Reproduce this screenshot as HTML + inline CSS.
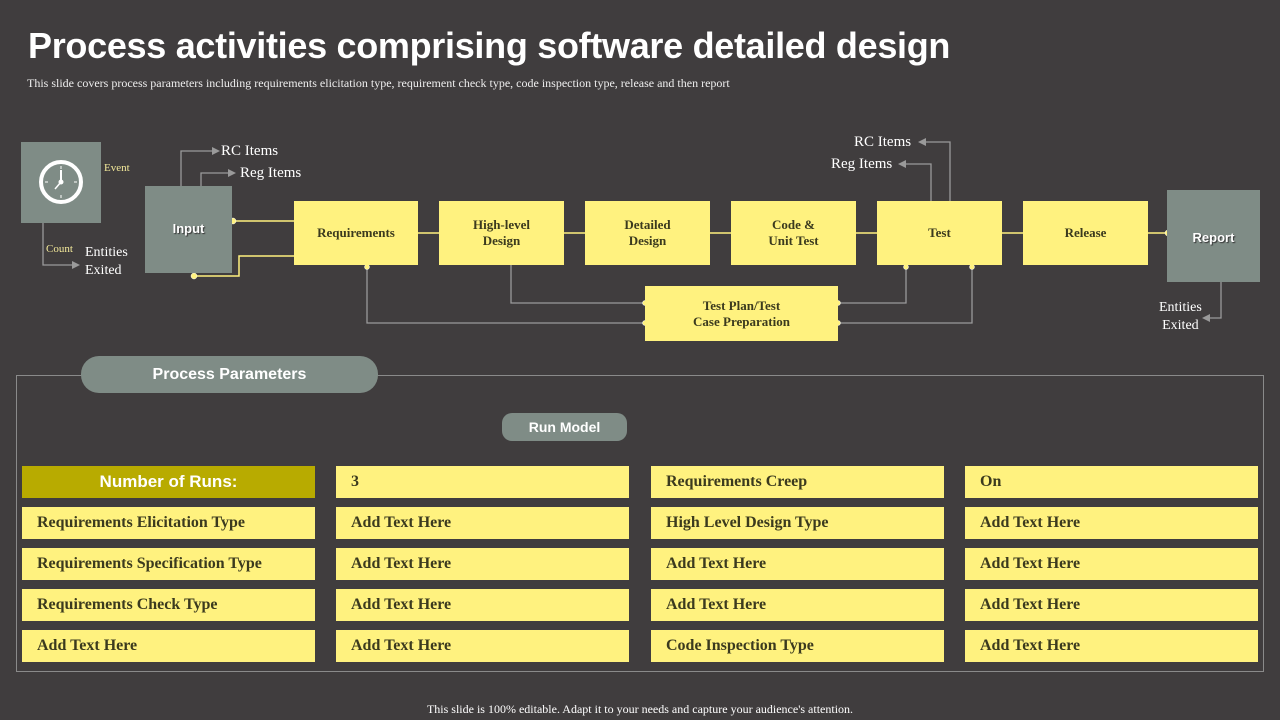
<!DOCTYPE html>
<html><head><meta charset="utf-8"><style>
*{margin:0;padding:0;box-sizing:border-box}
body{width:1280px;height:720px;background:#403d3e;position:relative;overflow:hidden;font-family:"Liberation Serif",serif}
.a{position:absolute}
h1{position:absolute;left:28px;top:25px;font:bold 36px "Liberation Sans",sans-serif;color:#fff;letter-spacing:-0.3px;white-space:nowrap}
.sub{left:27px;top:76px;font-size:12px;color:#eee;white-space:nowrap}
.y{background:#fff27f;color:#3b3a1e;font-weight:bold;font-size:13px;display:flex;align-items:center;justify-content:center;text-align:center;line-height:16px}
.g{background:#7f8c86;color:#fff;font:bold 13px "Liberation Sans",sans-serif;display:flex;align-items:center;justify-content:center;text-shadow:1px 1px 1px #333}
.w{color:#fff;font-size:15px;white-space:nowrap}
.c{background:#fff27f;color:#3b3a1e;font-weight:bold;font-size:16px;display:flex;align-items:center;padding-left:15px;height:32px;width:293px}
.pill{background:#7f8c86;color:#fff;font:bold 16px "Liberation Sans",sans-serif;display:flex;align-items:center;justify-content:center;border-radius:14px}
</style></head><body>
<h1>Process activities comprising software detailed design</h1>
<div class="a sub">This slide covers process parameters including requirements elicitation type, requirement check type, code inspection type, release and then report</div>

<svg class="a" style="left:0;top:0" width="1280" height="720">
<g stroke="#9a9a9a" stroke-width="1.3" fill="none">
<polyline points="181,186 181,151 212,151"/><polyline points="201,186 201,173 228,173"/>
<polyline points="43,223 43,265 72,265"/>
<polyline points="950,201 950,142 926,142"/><polyline points="931,201 931,164 906,164"/>
<polyline points="1221,282 1221,318 1210,318"/>
<polyline points="367,265 367,323 645,323"/><polyline points="511,265 511,303 645,303"/>
<polyline points="906,265 906,303 838,303"/><polyline points="972,265 972,323 838,323"/>
</g>
<g fill="#9a9a9a"><polygon points="212,147 220,151 212,155"/><polygon points="228,169 236,173 228,177"/><polygon points="72,261 80,265 72,269"/>
<polygon points="926,138 918,142 926,146"/><polygon points="906,160 898,164 906,168"/><polygon points="1210,314 1202,318 1210,322"/></g>
<g stroke="#fff27f" stroke-width="1.5" fill="none">
<line x1="233" y1="221" x2="294" y2="221"/><polyline points="194,276 239,276 239,256 294,256"/>
<line x1="418" y1="233" x2="439" y2="233"/><line x1="564" y1="233" x2="585" y2="233"/><line x1="710" y1="233" x2="731" y2="233"/><line x1="856" y1="233" x2="877" y2="233"/><line x1="1002" y1="233" x2="1023" y2="233"/><line x1="1148" y1="233" x2="1167" y2="233"/>
</g>
<g fill="#fff27f" stroke="#fff" stroke-width="0.5"><circle cx="233" cy="221" r="3"/><circle cx="194" cy="276" r="3"/><circle cx="1168" cy="233" r="3"/>
<circle cx="367" cy="267" r="2.5"/><circle cx="906" cy="267" r="2.5"/><circle cx="972" cy="267" r="2.5"/><circle cx="645" cy="303" r="2.5"/><circle cx="645" cy="323" r="2.5"/><circle cx="838" cy="303" r="2.5"/><circle cx="838" cy="323" r="2.5"/></g>
<rect x="16.5" y="375.5" width="1247" height="296" fill="none" stroke="#8a8a8a"/>
</svg>

<div class="a" style="left:21px;top:142px;width:80px;height:81px;background:#7f8c86"></div>
<svg class="a" style="left:37px;top:158px" width="48" height="48"><circle cx="24" cy="24" r="20" fill="none" stroke="#fff" stroke-width="4"/><g stroke="#fff" stroke-width="1"><line x1="24" y1="8" x2="24" y2="11"/><line x1="40" y1="24" x2="37" y2="24"/><line x1="24" y1="40" x2="24" y2="37"/><line x1="8" y1="24" x2="11" y2="24"/></g><line x1="24" y1="24" x2="24" y2="12" stroke="#fff" stroke-width="2"/><line x1="24" y1="24" x2="18" y2="31" stroke="#fff" stroke-width="1.5"/><circle cx="24" cy="24" r="2.5" fill="#fff"/></svg>
<div class="a" style="left:104px;top:162px;font-size:11px;color:#f3e99a">Event</div>
<div class="a" style="left:46px;top:243px;font-size:11px;color:#f3e99a">Count</div>
<div class="a w" style="left:85px;top:244px;font-size:14px;line-height:18px">Entities<br>Exited</div>
<div class="a w" style="left:221px;top:143px">RC Items</div>
<div class="a w" style="left:240px;top:165px">Reg Items</div>
<div class="a w" style="left:854px;top:134px">RC Items</div>
<div class="a w" style="left:831px;top:156px">Reg Items</div>
<div class="a w" style="left:1159px;top:299px;font-size:14px;line-height:18px;text-align:center">Entities<br>Exited</div>

<div class="a g" style="left:145px;top:186px;width:87px;height:87px;padding-bottom:2px">Input</div>
<div class="a g" style="left:1167px;top:190px;width:93px;height:92px;padding-top:2px">Report</div>
<div class="a y" style="left:294px;top:201px;width:124px;height:64px">Requirements</div>
<div class="a y" style="left:439px;top:201px;width:125px;height:64px">High-level<br>Design</div>
<div class="a y" style="left:585px;top:201px;width:125px;height:64px">Detailed<br>Design</div>
<div class="a y" style="left:731px;top:201px;width:125px;height:64px">Code &amp;<br>Unit Test</div>
<div class="a y" style="left:877px;top:201px;width:125px;height:64px">Test</div>
<div class="a y" style="left:1023px;top:201px;width:125px;height:64px">Release</div>
<div class="a y" style="left:645px;top:286px;width:193px;height:55px">Test Plan/Test<br>Case Preparation</div>

<div class="a pill" style="left:81px;top:356px;width:297px;height:37px;border-radius:18px">Process Parameters</div>
<div class="a pill" style="left:502px;top:413px;width:125px;height:28px;font-size:14px;border-radius:10px">Run Model</div>

<div class="a c" style="left:22px;top:466px;background:#b8ab00;color:#fff;font:bold 17px 'Liberation Sans',sans-serif;justify-content:center;padding:0">Number of Runs:</div>
<div class="a c" style="left:336px;top:466px">3</div>
<div class="a c" style="left:651px;top:466px">Requirements Creep</div>
<div class="a c" style="left:965px;top:466px">On</div>

<div class="a c" style="left:22px;top:507px">Requirements Elicitation Type</div>
<div class="a c" style="left:336px;top:507px">Add Text Here</div>
<div class="a c" style="left:651px;top:507px">High Level Design Type</div>
<div class="a c" style="left:965px;top:507px">Add Text Here</div>

<div class="a c" style="left:22px;top:548px">Requirements Specification Type</div>
<div class="a c" style="left:336px;top:548px">Add Text Here</div>
<div class="a c" style="left:651px;top:548px">Add Text Here</div>
<div class="a c" style="left:965px;top:548px">Add Text Here</div>

<div class="a c" style="left:22px;top:589px">Requirements Check Type</div>
<div class="a c" style="left:336px;top:589px">Add Text Here</div>
<div class="a c" style="left:651px;top:589px">Add Text Here</div>
<div class="a c" style="left:965px;top:589px">Add Text Here</div>

<div class="a c" style="left:22px;top:630px">Add Text Here</div>
<div class="a c" style="left:336px;top:630px">Add Text Here</div>
<div class="a c" style="left:651px;top:630px">Code Inspection Type</div>
<div class="a c" style="left:965px;top:630px">Add Text Here</div>

<div class="a" style="left:0;width:1280px;top:702px;text-align:center;font-size:12px;color:#fff">This slide is 100% editable. Adapt it to your needs and capture your audience's attention.</div>
</body></html>
